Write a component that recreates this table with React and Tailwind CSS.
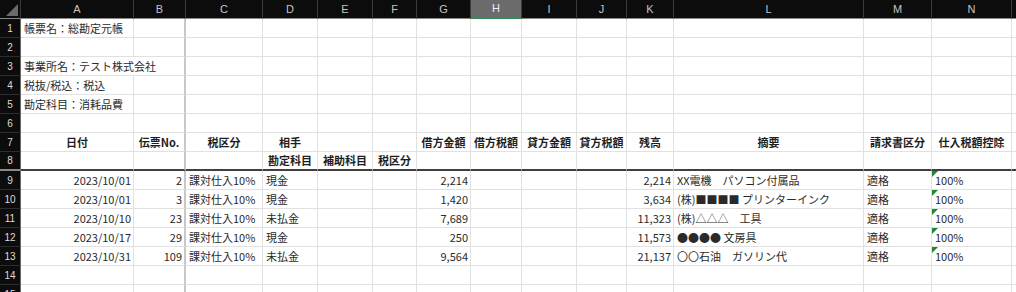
const COLS = ['A', 'B', 'C', 'D', 'E', 'F', 'G', 'H', 'I', 'J', 'K', 'L', 'M', 'N', 'O']

const GRID =
  'grid grid-cols-[21px_113px_52px_77px_55px_55px_44px_54px_51px_55px_50px_47px_190px_68px_80px_80px] auto-rows-[19px]'

const R = (text) => ({ text, align: 'right' })
const L = (text) => ({ text, align: 'left' })
const H = (text) => ({ text, align: 'center', bold: true })

const ledger = [
  ['2023/10/01', '2', '現金', '2,214', '2,214', 'XX電機　パソコン付属品'],
  ['2023/10/01', '3', '現金', '1,420', '3,634', '(株)■■■■ プリンターインク'],
  ['2023/10/10', '23', '未払金', '7,689', '11,323', '(株)△△△　工具'],
  ['2023/10/17', '29', '現金', '250', '11,573', '●●●● 文房具'],
  ['2023/10/31', '109', '未払金', '9,564', '21,137', '〇〇石油　ガソリン代'],
]

const ROWS = [
  { A: L('帳票名：総勘定元帳') },
  {},
  { A: { ...L('事業所名：テスト株式会社'), spill: true } },
  { A: L('税抜/税込：税込') },
  { A: L('勘定科目：消耗品費') },
  {},
  {
    A: H('日付'),
    B: H('伝票No.'),
    C: H('税区分'),
    D: H('相手'),
    G: H('借方金額'),
    H: H('借方税額'),
    I: H('貸方金額'),
    J: H('貸方税額'),
    K: H('残高'),
    L: H('摘要'),
    M: H('請求書区分'),
    N: H('仕入税額控除'),
  },
  { D: H('勘定科目'), E: H('補助科目'), F: H('税区分') },
  ...ledger.map(([date, no, acct, debit, bal, memo]) => ({
    A: R(date),
    B: R(no),
    C: L('課対仕入10%'),
    D: L(acct),
    G: R(debit),
    K: R(bal),
    L: L(memo),
    M: L('適格'),
    N: { ...L('100%'), flag: true },
  })),
  {},
  {},
]

function Corner() {
  return (
    <div className="bg-[#0c0c0c] border-r border-r-[#3a3a3a] border-b border-b-[#8a8a8a] flex items-end justify-end pr-[2px] pb-[2px]">
      <svg width="12" height="12" viewBox="0 0 12 12">
        <polygon points="12,0 12,12 0,12" fill="#6a6a6a" />
      </svg>
    </div>
  )
}

// the O column only peeks in at the right edge, its letter is off screen
function ColHeader({ letter }) {
  const selected = letter === 'H'
  return (
    <div
      className={`flex items-center justify-center text-[11px] border-r border-r-[#3a3a3a] ${
        selected
          ? 'bg-[#6b6b6b] text-[#ededed] border-b-2 border-b-[#2f8f55]'
          : 'bg-[#0c0c0c] text-[#c4c4c4] border-b border-b-[#8a8a8a]'
      }`}
      style={{ fontFamily: '"Liberation Sans", Arial, sans-serif' }}
    >
      {letter === 'O' ? '' : letter}
    </div>
  )
}

function RowHeader({ n }) {
  return (
    <div
      className={`bg-[#0c0c0c] text-[#dcdcdc] text-[10px] flex items-center justify-center border-r border-r-[#6a6a6a] ${
        n === 8 ? 'border-b-2 border-b-[#8a8a8a]' : 'border-b border-b-[#2c2c2c]'
      }`}
      style={{ fontFamily: '"Liberation Sans", Arial, sans-serif' }}
    >
      {n}
    </div>
  )
}

function Cell({ col, row, cell }) {
  const right =
    col === 'B'
      ? 'border-r-2 border-r-[#c8c8c8]'
      : cell?.spill
        ? 'border-r border-r-transparent'
        : 'border-r border-r-[#e1e1e1]'
  const bottom = row === 8 ? 'border-b-2 border-b-[#404040]' : 'border-b border-b-[#e1e1e1]'
  const align =
    cell?.align === 'right'
      ? 'justify-end pr-[2px]'
      : cell?.align === 'center'
        ? 'justify-center'
        : 'justify-start pl-[3px]'

  return (
    <div className={`relative flex items-center whitespace-nowrap ${right} ${bottom} ${align}`}>
      {cell?.flag && (
        <svg className="absolute left-0 top-0" width="6" height="6" viewBox="0 0 6 6">
          <polygon points="0,0 6,0 0,6" fill="#1f8a2e" />
        </svg>
      )}
      {cell && (
        <span className={`relative z-10 text-[11px] ${cell.bold ? 'font-bold text-[#1e1e1e]' : 'text-[#2a2a2a]'}`}>
          {cell.text}
        </span>
      )}
    </div>
  )
}

export default function App() {
  return (
    <div
      className="w-[1016px] h-[292px] overflow-hidden bg-white"
      style={{ fontFamily: '"Noto Sans CJK JP", "Liberation Sans", sans-serif' }}
    >
      <div className={GRID}>
        <Corner />
        {COLS.map((c) => (
          <ColHeader key={c} letter={c} />
        ))}
        {ROWS.map((row, i) => {
          const n = i + 1
          return [
            <RowHeader key={`h${n}`} n={n} />,
            ...COLS.map((c) => <Cell key={`${c}${n}`} col={c} row={n} cell={row[c]} />),
          ]
        })}
      </div>
    </div>
  )
}
